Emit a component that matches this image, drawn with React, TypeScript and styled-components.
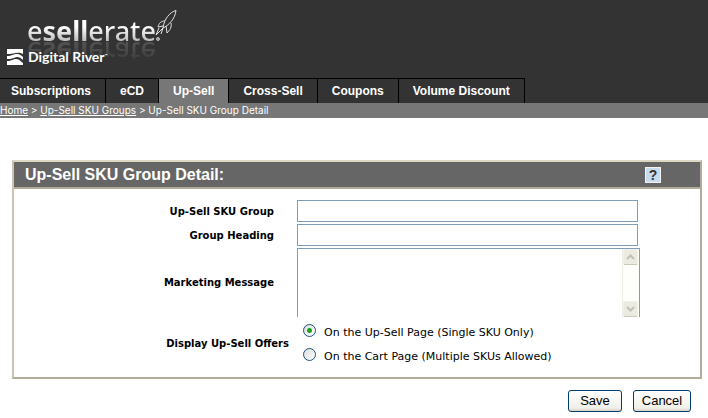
import React, { useState } from "react";
import styled, { createGlobalStyle, css } from "styled-components";

const GlobalStyle = createGlobalStyle`
  *, *::before, *::after { box-sizing: border-box; }
  body { margin: 0; background: #fff; color: #000; font-family: "Liberation Sans", Arial, sans-serif; }
`;

const Header = styled.header`
  background: #333;
  padding-top: 5px;
`;

const Brand = styled.div`
  height: 73px;
  padding-left: 7px;
`;

const Wordmark = styled.div`
  display: flex;
  align-items: flex-start;
  height: 43px;
  padding: 4px 0 0 20px;
`;

const BrandName = styled.span`
  font: 500 27px/44px "Noto Sans", "Open Sans", sans-serif;
  color: transparent;
  background: linear-gradient(#fff 40%, #b8b8b8 75%);
  background-clip: text;
  -webkit-background-clip: text;
  -webkit-box-reflect: below -23px linear-gradient(transparent 25%, rgba(255, 255, 255, 0.35));

  b { font-weight: 700; }
`;

const Rocket = styled.svg`
  flex: none;
  width: 24px;
  height: 34px;
  margin-left: -2px;
`;

const Parent = styled.div`
  position: relative;
  display: flex;
  align-items: center;
  gap: 5px;
  color: #fff;
  font: 700 14px/18px "Lato", "Open Sans", sans-serif;

  sup { font-size: 4px; line-height: 4px; vertical-align: 5px; }
`;

const RiverMark = styled.svg`
  width: 16px;
  height: 16px;
`;

const TabBar = styled.nav`
  display: flex;
  height: 25px;
`;

const Tab = styled.a<{ $active?: boolean }>`
  padding: 0 14px;
  border-top: 1px solid #000;
  border-right: 1px solid #000;
  background: ${(p) => (p.$active ? "#777" : "#333")};
  color: #fff;
  font-size: 12px;
  font-weight: 700;
  line-height: 25px;
  text-decoration: none;
  white-space: nowrap;

  &:first-child { padding-left: 11px; }
`;

const Breadcrumb = styled.nav`
  background: #777;
  color: #fff;
  font: 10px/15px "Inter", "Liberation Sans", sans-serif;
  white-space: nowrap;

  a { color: inherit; }
`;

const Main = styled.main`
  padding: 42px 6px 0 12px;
`;

const Panel = styled.section`
  border: 2px solid;
  border-color: #dcd8c4 #b0ac98 #b0ac98 #c8c4b0;
`;

const PanelHeader = styled.div`
  display: flex;
  align-items: center;
  justify-content: space-between;
  height: 27px;
  padding: 0 39px 0 11px;
  border-bottom: 2px solid #b0ac98;
  background: #666;
`;

const PanelTitle = styled.h1`
  margin: 0;
  color: #fff;
  font-size: 16px;
  line-height: 25px;
`;

const HelpButton = styled.button`
  width: 16px;
  height: 16px;
  padding: 0;
  border: 1px solid #f4f4f4;
  background: #c8dcf0;
  color: #333;
  font: 700 14px/14px "Liberation Sans", Arial, sans-serif;
`;

const Form = styled.form`
  display: grid;
  grid-template-columns: 275px minmax(0, 1fr);
  row-gap: 2px;
  padding: 11px 60px 9px 0;
  font-family: "DejaVu Sans", Verdana, sans-serif;
`;

const labelText = css`
  font-size: 10px;
  font-weight: 700;
  white-space: nowrap;
`;

const Label = styled.label`
  ${labelText}
  align-self: center;
  justify-self: end;
  padding-right: 15px;
`;

const GroupLabel = styled.span`
  ${labelText}
  align-self: center;
  justify-self: end;
`;

const Field = styled.div`
  padding: 0 2px 0 8px;
`;

const TextInput = styled.input`
  display: block;
  width: 100%;
  height: 22px;
  padding: 0 4px;
  border: 1px solid #7f9db9;
  background: #fff;
`;

const MessageBox = styled.div`
  display: flex;
  height: 69px;
  margin-left: 8px;
  border: 1px solid #7f9db9;
  border-bottom: 0;
`;

const Message = styled.textarea`
  flex: 1;
  min-width: 0;
  padding: 2px 4px;
  border: 0;
  outline: 0;
  resize: none;
  scrollbar-width: none;
`;

const ScrollTrack = styled.div`
  display: flex;
  flex-direction: column;
  justify-content: space-between;
  width: 17px;
  border-left: 1px solid #eeede5;
  background: #fefefb;
`;

const ScrollButton = styled.button`
  display: flex;
  align-items: center;
  justify-content: center;
  width: 15px;
  height: 16px;
  padding: 0;
  border: 1px solid #f2f1e8;
  border-bottom-color: #c8c8b8;
  border-radius: 2px;
  background: #ecebe2;
`;

const Options = styled.div`
  padding: 1px 0 0 14px;
`;

const Option = styled.label`
  display: flex;
  align-items: center;
  gap: 8px;
  height: 24px;
  font-size: 11px;
  white-space: nowrap;
`;

const Radio = styled.input`
  appearance: none;
  width: 13px;
  height: 13px;
  margin: 0 0 3px;
  border: 1px solid #1c5180;
  border-radius: 50%;
  background: linear-gradient(135deg, #dcdcd7, #fff);

  &:checked {
    background: radial-gradient(circle, #21a121 0 2px, transparent 3px), linear-gradient(135deg, #dcdcd7, #fff);
  }
`;

const Actions = styled.div`
  display: flex;
  justify-content: flex-end;
  gap: 11px;
  padding: 11px 11px 0 0;
`;

const ActionButton = styled.button<{ $width: number }>`
  width: ${(p) => p.$width}px;
  height: 22px;
  padding: 0;
  border: 1px solid #003c74;
  border-radius: 3px;
  background: linear-gradient(#fff, #f0f0ea 85%, #d8d0c4);
  color: #000;
  font: 13px/18px "Liberation Sans", Arial, sans-serif;
`;

const Chevron = ({ up }: { up?: boolean }) => (
  <svg width="9" height="6" viewBox="0 0 9 6" aria-hidden="true">
    <path d={up ? "M1 5 4.500 1.500 8 5" : "M1 1 4.500 4.500 8 1"} fill="none" stroke="#c0c0b8" strokeWidth="2" />
  </svg>
);

const tabs = ["Subscriptions", "eCD", "Up-Sell", "Cross-Sell", "Coupons", "Volume Discount"];
const placements = [
  { value: "page", text: "On the Up-Sell Page (Single SKU Only)" },
  { value: "cart", text: "On the Cart Page (Multiple SKUs Allowed)" },
];

export default function App() {
  const [placement, setPlacement] = useState("page");

  return (
    <>
      <GlobalStyle />
      <Header>
        <Brand>
          <Wordmark>
            <BrandName>e<b>sell</b>erate</BrandName>
            <Rocket viewBox="0 0 24 34" aria-hidden="true" fill="none" stroke="#e4e4e4" strokeWidth="1">
              <path d="M22 1.500C16 3 10 10 9 19c6-3 12-9 13-17.500z" />
              <path d="M11 12C7 12 5 14 4 18l5-1M17 14c1 4-1 7-4 10l-1-7M9 19l-7 7 3-7M9 19l-2 6" />
              <circle cx="4" cy="30" r="1.500" fill="#999" stroke="#bbb" />
            </Rocket>
          </Wordmark>
          <Parent>
            <RiverMark viewBox="0 0 16 16" aria-hidden="true">
              <path
                fill="#fff"
                d="M0 0h16v5C11 2 7 5 0 5zM0 7c5 0 6-2 10-2 3 0 5 2 6 3v3C13 8 10 7 7 9c-3 1-5 1-7 1zM0 12c5 0 6-2 9-2 4 0 5 3 7 4v2H0z"
              />
            </RiverMark>
            <span>Digital River<sup>™</sup></span>
          </Parent>
        </Brand>
        <TabBar aria-label="Sections">
          {tabs.map((name) => (
            <Tab key={name} href="#" $active={name === "Up-Sell"}>{name}</Tab>
          ))}
        </TabBar>
      </Header>
      <Breadcrumb aria-label="Breadcrumb">
        <a href="#">Home</a> &gt; <a href="#">Up-Sell SKU Groups</a> &gt; Up-Sell SKU Group Detail
      </Breadcrumb>
      <Main>
        <Panel>
          <PanelHeader>
            <PanelTitle>Up-Sell SKU Group Detail:</PanelTitle>
            <HelpButton type="button">?</HelpButton>
          </PanelHeader>
          <Form id="group-form" onSubmit={(e) => e.preventDefault()}>
            <Label htmlFor="group">Up-Sell SKU Group</Label>
            <Field><TextInput id="group" /></Field>
            <Label htmlFor="heading">Group Heading</Label>
            <Field><TextInput id="heading" /></Field>
            <Label htmlFor="message">Marketing Message</Label>
            <MessageBox>
              <Message id="message" />
              <ScrollTrack>
                <ScrollButton type="button" aria-label="Scroll up"><Chevron up /></ScrollButton>
                <ScrollButton type="button" aria-label="Scroll down"><Chevron /></ScrollButton>
              </ScrollTrack>
            </MessageBox>
            <GroupLabel id="placement-label">Display Up-Sell Offers</GroupLabel>
            <Options role="radiogroup" aria-labelledby="placement-label">
              {placements.map(({ value, text }) => (
                <Option key={value}>
                  <Radio
                    type="radio"
                    name="placement"
                    checked={placement === value}
                    onChange={() => setPlacement(value)}
                  />
                  {text}
                </Option>
              ))}
            </Options>
          </Form>
        </Panel>
        <Actions>
          <ActionButton type="submit" form="group-form" $width={54}>Save</ActionButton>
          <ActionButton type="button" $width={58}>Cancel</ActionButton>
        </Actions>
      </Main>
    </>
  );
}
